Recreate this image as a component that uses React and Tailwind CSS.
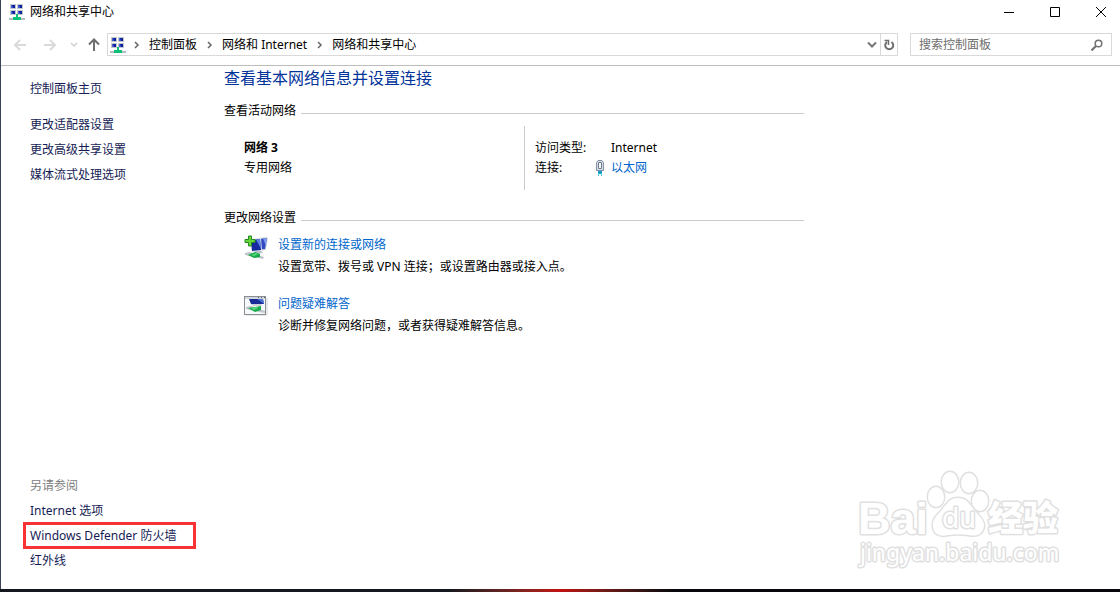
import React from 'react';

const sideLinks = ['更改适配器设置', '更改高级共享设置', '媒体流式处理选项'];

const tasks = [
  {
    title: '设置新的连接或网络',
    text: '设置宽带、拨号或 VPN 连接；或设置路由器或接入点。',
    Icon: NewConnectionIcon,
  },
  {
    title: '问题疑难解答',
    text: '诊断并修复网络问题，或者获得疑难解答信息。',
    Icon: TroubleshootIcon,
  },
];

function NetworkIcon() {
  return (
    <svg width="16" height="16" viewBox="0 0 16 16" className="shrink-0" aria-hidden="true">
      {[[1, 0], [8, 0], [1, 6], [8, 6]].map(([x, y]) => (
        <g key={`${x}-${y}`}>
          <rect x={x} y={y} width="6" height="5" fill="#c3c8cc" />
          <rect x={x + 1} y={y + 1} width="4" height="3" fill="#4d63cc" />
          <path d={`M${x + 2} ${y + 1}h3v3h-2z`} fill="#0c1f9e" />
        </g>
      ))}
      <path d="M7 10h2v3h3v3H4v-3h3z" fill="#0dc078" />
      <path d="M0 14h4v2H0zM12 14h4v2h-4z" fill="#b4bcc0" />
    </svg>
  );
}

function NewConnectionIcon() {
  return (
    <svg width="24" height="25" viewBox="0 0 24 25" className="shrink-0" aria-hidden="true">
      <path d="M14 3l9-1 1 1-2 12-6 1z" fill="#d5d9e0" />
      <path d="M15 4l8-1-2 11-5 .5z" fill="#3149c4" />
      <path d="M19 3.500l4-.5-1 8z" fill="#7d9cec" />
      <path d="M5 4l12-1 1 13-10 1z" fill="#dfe3e8" />
      <path d="M7 5l9-1 1 11-9 1z" fill="#1629a0" />
      <path d="M12 4.500l4-.5 1 10z" fill="#5b80e4" />
      <path d="M11 16h6l2 2-7 1z" fill="#b9c0c8" />
      <path d="M1 18l5-1 14 5-1 2-5-1-13-3z" fill="#bfc6cb" />
      <path d="M4 20l7-3 5 2v3l-6 1z" fill="#18a94b" />
      <path d="M7 20l5-2 2 1-4 2z" fill="#54d97c" />
      <path d="M4.500 1h3v3.500H11v3H7.500V11h-3V7.500H1v-3h3.500z" fill="#64d63c" stroke="#248c1c" />
    </svg>
  );
}

function TroubleshootIcon() {
  return (
    <svg width="24" height="24" viewBox="0 0 24 24" className="shrink-0" aria-hidden="true">
      <path d="M2 21h21V4" fill="none" stroke="#d4d4d4" />
      <rect x="0.500" y="2.500" width="21" height="18" fill="#f8f9fa" stroke="#888e94" />
      <path d="M1 4h20" stroke="#d3d7db" strokeWidth="2" />
      <path d="M14 3.500h1m2 0h1m2 0h1" stroke="#555b62" />
      <path d="M5 5h14l1 5H7z" fill="#182b96" />
      <path d="M13 5h6l1 5z" fill="#4772d3" />
      <path d="M7 10h10l1 2H9z" fill="#cbd1d6" />
      <path d="M2 13l5-1 14 5v2l-6-1-13-3z" fill="#c1c7cb" />
      <path d="M4 14l7-1 6-1v4l-6 2z" fill="#1aac4c" />
      <path d="M7 14l6-1 1 1-4 2z" fill="#63d885" />
    </svg>
  );
}

function EthernetIcon() {
  return (
    <svg width="10" height="16" viewBox="0 0 10 16" className="shrink-0" aria-hidden="true">
      <path d="M3 .5h4l1.500 2v8h-7v-8z" fill="#d6dde5" stroke="#8290a2" />
      <path d="M3.500 2.500h3v6h-3z" fill="#f4f7fa" stroke="#718096" />
      <path d="M3 11h4v3H3z" fill="#159ac4" />
      <path d="M3.500 13v3M6.500 13v3" stroke="#52c4e4" />
    </svg>
  );
}

function Chevron({ className = '' }) {
  return (
    <svg width="6" height="8" viewBox="0 0 6 8" className={`shrink-0 ${className}`} aria-hidden="true">
      <path d="M1 1l3 3-3 3" fill="none" stroke="#666" strokeWidth="1.500" />
    </svg>
  );
}

function TitleBar() {
  return (
    <header className="flex h-6 items-center pl-2">
      <NetworkIcon />
      <h1 className="ml-1 flex-1 pl-px">网络和共享中心</h1>
      <div className="-mr-1 flex overflow-hidden">
        <button type="button" aria-label="最小化" className="flex w-[46px] justify-center">
          <svg width="10" height="10" viewBox="0 0 10 10"><path d="M0 5.500h10" stroke="#000" /></svg>
        </button>
        <button type="button" aria-label="最大化" className="flex w-[46px] justify-center">
          <svg width="10" height="10" viewBox="0 0 10 10"><path d="M.5.5h9v9h-9z" fill="none" stroke="#000" /></svg>
        </button>
        <button type="button" aria-label="关闭" className="flex w-[46px] justify-center">
          <svg width="10" height="10" viewBox="0 0 10 10"><path d="M0 0l10 10M10 0L0 10" stroke="#000" /></svg>
        </button>
      </div>
    </header>
  );
}

function AddressBar() {
  return (
    <div className="flex items-center border-b border-[#bdbdbd] pt-[9px] pr-2 pb-[9px] pl-3">
      <button type="button" aria-label="后退" className="w-[30px]">
        <svg width="14" height="12" viewBox="0 0 14 12"><path d="M13 6H2M7 1L2 6l5 5" fill="none" stroke="#dadada" strokeWidth="2" /></svg>
      </button>
      <button type="button" aria-label="前进" className="w-[27px]">
        <svg width="14" height="12" viewBox="0 0 14 12"><path d="M1 6h11M7 1l5 5-5 5" fill="none" stroke="#dadada" strokeWidth="2" /></svg>
      </button>
      <button type="button" aria-label="最近浏览的位置" className="w-[18px]">
        <svg width="8" height="6" viewBox="0 0 8 6"><path d="M1 1l3 3 3-3" fill="none" stroke="#d0d0d0" strokeWidth="1.500" /></svg>
      </button>
      <button type="button" aria-label="向上" className="w-[19px]">
        <svg width="12" height="13" viewBox="0 0 12 13"><path d="M6 13V2M1 6.500L6 1.500l5 5" fill="none" stroke="#6e6e6e" strokeWidth="2" /></svg>
      </button>
      <nav className="flex h-[23px] flex-1 items-center border border-[#d9d9d9] pl-[2px]">
        <NetworkIcon />
        <Chevron className="mr-[9px] ml-2" />
        <a href="#panel">控制面板</a>
        <Chevron className="mr-[9px] ml-[10px]" />
        <a href="#network">网络和 Internet</a>
        <Chevron className="mr-[9px] ml-[10px]" />
        <a href="#center">网络和共享中心</a>
        <button type="button" aria-label="以前的位置" className="ml-auto flex w-4 justify-center">
          <svg width="10" height="8" viewBox="0 0 10 8"><path d="M1 1.500l4 4 4-4" fill="none" stroke="#777" strokeWidth="2" /></svg>
        </button>
        <button type="button" aria-label="刷新" className="flex h-full w-[17px] items-center justify-center border-l border-[#d9d9d9]">
          <svg width="12" height="12" viewBox="0 0 12 12">
            <path d="M8.500 3A4 4 0 1 1 4 3" fill="none" stroke="#6e6e6e" strokeWidth="2" />
            <path d="M1.500 1.500h4V6" fill="none" stroke="#6e6e6e" strokeWidth="1.500" />
          </svg>
        </button>
      </nav>
      <div className="ml-3 flex h-[23px] w-[202px] items-center border border-[#d9d9d9] px-2">
        <input
          type="search"
          aria-label="搜索控制面板"
          placeholder="搜索控制面板"
          className="min-w-0 flex-1 outline-none placeholder:text-[#6d6d6d]"
        />
        <svg width="12" height="12" viewBox="0 0 12 12" aria-hidden="true">
          <circle cx="7.500" cy="4.500" r="3.300" fill="none" stroke="#707070" strokeWidth="1.500" />
          <path d="M5 7l-4.500 4.500" stroke="#707070" strokeWidth="2" />
        </svg>
      </div>
    </div>
  );
}

function Sidebar() {
  return (
    <aside className="flex w-[223px] shrink-0 flex-col pt-[10px] pb-4 pl-[29px] leading-[25px] text-[#151c55]">
      <a href="#home">控制面板主页</a>
      <ul className="mt-[11px]">
        {sideLinks.map((link) => (
          <li key={link}><a href="#settings">{link}</a></li>
        ))}
      </ul>
      <div className="mt-auto flex flex-col items-start">
        <h2 className="text-[#808080]">另请参阅</h2>
        <a href="#options">Internet 选项</a>
        <a href="#firewall" className="-mt-px -mb-px -ml-[7px] w-[173px] border-3 border-[#f93333] pl-1 leading-[21px]">
          Windows Defender 防火墙
        </a>
        <a href="#infrared">红外线</a>
      </div>
    </aside>
  );
}

function SectionTitle({ children }) {
  return (
    <div className="flex items-center gap-[5px]">
      <h3>{children}</h3>
      <div className="mt-[5px] h-px flex-1 bg-[#cbcbcb]" />
    </div>
  );
}

function Watermark() {
  return (
    <svg width="206" height="106" viewBox="0 0 206 106" className="absolute right-[57px] bottom-[17px]" aria-hidden="true">
      <g fill="#fff" stroke="#e0e0e0" strokeWidth="3" strokeLinejoin="round" paintOrder="stroke">
        <text x="1" y="68" fontSize="45" fontWeight="700" fontFamily="Liberation Sans, sans-serif">Bai</text>
        <ellipse cx="79" cy="31" rx="8" ry="10" />
        <ellipse cx="93" cy="16" rx="8" ry="10" />
        <ellipse cx="112" cy="17" rx="8" ry="10" />
        <ellipse cx="123" cy="35" rx="8" ry="10" />
        <path d="M101 32c-9 0-12 7-17 13-5 5-9 9-8 16 1 8 8 10 15 8 7-1 13-1 20 0 9 2 15-1 16-9 0-7-5-10-9-15-5-6-8-13-17-13z" />
        <text x="85" y="62" fontSize="28" fontFamily="Inter, sans-serif">du</text>
        <text x="131" y="65" fontSize="35" fontWeight="900" fontFamily="Noto Sans CJK SC, sans-serif">经验</text>
        <text x="3" y="95" fontSize="23" fontFamily="Noto Sans, sans-serif">jingyan.baidu.com</text>
      </g>
    </svg>
  );
}

export default function App() {
  return (
    <div className="flex min-h-screen flex-col overflow-x-hidden bg-linear-to-r from-[#15171f] from-40% via-[#c01010] via-50% to-[#08080c] to-60% pb-[3px] font-['Noto_Sans','Noto_Sans_CJK_SC',sans-serif] text-[12px] leading-5 text-black">
      <div className="relative flex flex-1 flex-col border-l border-[#3a4256] bg-white">
        <TitleBar />
        <AddressBar />
        <div className="flex flex-1">
          <Sidebar />
          <main className="max-w-[580px] flex-1 pt-[2px]">
            <h2 className="text-[16px] leading-5 text-[#003399]">查看基本网络信息并设置连接</h2>
            <section className="mt-[13px]">
              <SectionTitle>查看活动网络</SectionTitle>
              <div className="mt-[5px] flex">
                <div className="w-[301px] border-r border-[#cbcbcb] py-3 pl-5">
                  <p className="font-bold">网络 3</p>
                  <p>专用网络</p>
                </div>
                <dl className="grid grid-cols-[60px_1fr] py-3 pl-[10px]">
                  <dt>访问类型:</dt>
                  <dd className="pl-4">Internet</dd>
                  <dt>连接:</dt>
                  <dd className="flex items-center gap-[6px]">
                    <EthernetIcon />
                    <a href="#ethernet" className="text-[#0066cc]">以太网</a>
                  </dd>
                </dl>
              </div>
            </section>
            <section className="mt-[18px]">
              <SectionTitle>更改网络设置</SectionTitle>
              <ul className="mt-[7px] flex flex-col gap-[17px] pl-5">
                {tasks.map(({ title, text, Icon }) => (
                  <li key={title} className="flex gap-[10px]">
                    <Icon />
                    <div>
                      <a href="#task" className="block text-[#0066cc]">{title}</a>
                      <p className="mt-[2px]">{text}</p>
                    </div>
                  </li>
                ))}
              </ul>
            </section>
          </main>
        </div>
        <Watermark />
      </div>
    </div>
  );
}
